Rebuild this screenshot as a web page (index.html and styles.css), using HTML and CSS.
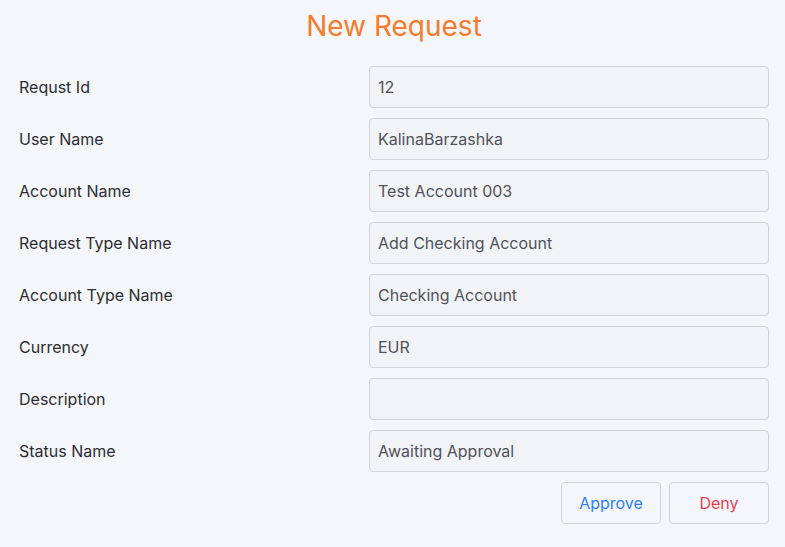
FILE: index.html
```html
<!DOCTYPE html>
<html>
<head>
<meta charset="utf-8">
<link rel="stylesheet" href="styles.css">
</head>
<body>
<div class="page">
  <h1 class="title">New Request</h1>
  <form class="form">
    <label class="label">Requst Id</label><div class="field">12</div>
    <label class="label">User Name</label><div class="field">KalinaBarzashka</div>
    <label class="label">Account Name</label><div class="field">Test Account 003</div>
    <label class="label">Request Type Name</label><div class="field">Add Checking Account</div>
    <label class="label">Account Type Name</label><div class="field">Checking Account</div>
    <label class="label">Currency</label><div class="field">EUR</div>
    <label class="label">Description</label><div class="field"></div>
    <label class="label">Status Name</label><div class="field">Awaiting Approval</div>
  </form>
  <div class="actions">
    <button type="button" class="btn btn-approve">Approve</button>
    <button type="button" class="btn btn-deny">Deny</button>
  </div>
</div>
</body>
</html>
```
FILE: styles.css
```css
html, body {
  margin: 0;
  padding: 0;
  background: #f5f6fa;
  font-family: Inter, "Noto Sans", sans-serif;
}
.page {
  width: 750px;
  padding: 0 16px 0 19px;
}
.title {
  margin: 0;
  height: 52px;
  line-height: 52px;
  text-align: center;
  font-size: 28px;
  font-weight: 400;
  color: #f47c2a;
}
.form {
  display: grid;
  grid-template-columns: 350px 400px;
  row-gap: 10px;
  margin-top: 14px;
}
.label {
  display: flex;
  align-items: center;
  font-size: 16px;
  color: #2b2d33;
}
.field {
  box-sizing: border-box;
  height: 42px;
  display: flex;
  align-items: center;
  padding: 0 8px;
  background: #f2f3f7;
  border: 1px solid #d2d3d8;
  border-radius: 4px;
  font-size: 16px;
  color: #505259;
}
.actions {
  display: flex;
  justify-content: flex-end;
  gap: 8px;
  margin-top: 10px;
}
.btn {
  box-sizing: border-box;
  width: 100px;
  height: 42px;
  background: #f5f6fa;
  border: 1px solid #d2d3d8;
  border-radius: 4px;
  font-family: Inter, "Noto Sans", sans-serif;
  font-size: 16px;
}
.btn-approve { color: #2f80f5; }
.btn-deny { color: #e83f4f; }
```
